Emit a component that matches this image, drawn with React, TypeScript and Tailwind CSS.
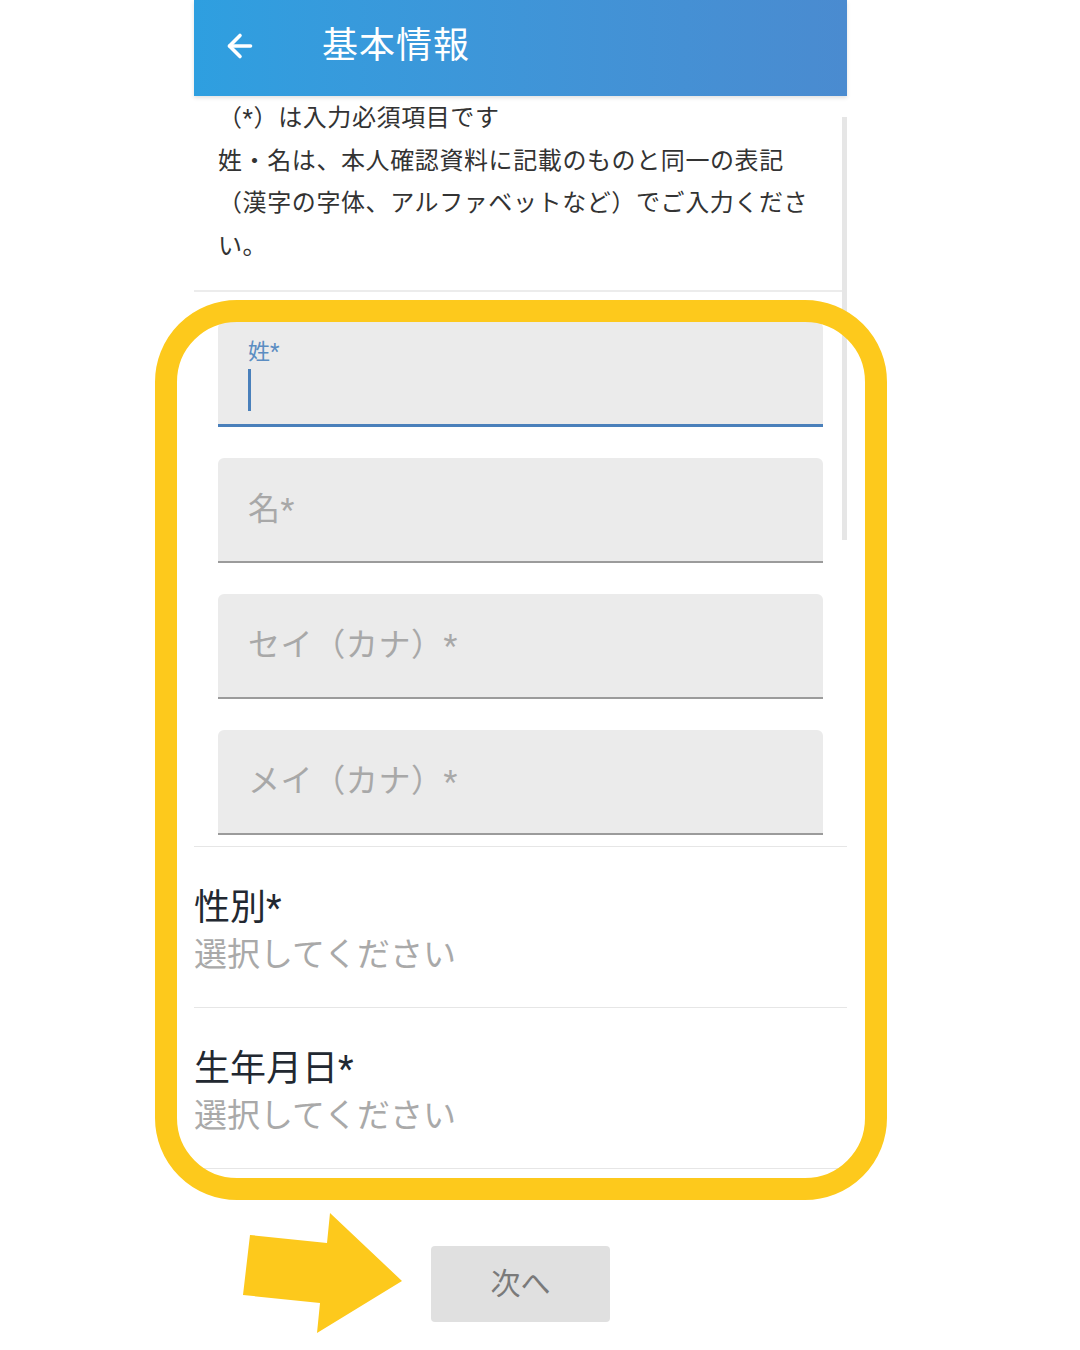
import { ArrowLeft } from "lucide-react";

const font = { fontFamily: 'Roboto, "Noto Sans CJK JP", "Noto Sans", sans-serif' };

function NameField({ label }: { label: string }) {
  return (
    <div className="flex h-[105px] items-center rounded-t-[6px] border-b-2 border-[#9b9b9b] bg-[#ebebeb] px-[30px]">
      <span className="text-[32px] leading-none tracking-[0.6px] text-[#a8a8a8]">{label}</span>
    </div>
  );
}

function SelectRow({ label }: { label: string }) {
  return (
    <div className="flex h-[161px] flex-col justify-center border-b border-[#e6e6e6] pt-[8px]">
      <span className="text-[36px] leading-[48px] text-[#222831]">{label}</span>
      <span className="text-[33px] leading-[46px] text-[#a9a9a9]">選択してください</span>
    </div>
  );
}

export default function App() {
  return (
    <div className="relative h-[1350px] w-[1080px] overflow-hidden bg-white" style={font}>
      <div className="ml-[194px] w-[653px]">
        <header className="relative z-10 flex h-[96px] items-center bg-gradient-to-r from-[#2e9fe0] to-[#4a8bd0] pb-[5px] shadow-[0_2px_4px_rgba(0,0,0,0.12)]">
          <ArrowLeft className="ml-[28px] h-[36px] w-[36px] text-white" strokeWidth={2.4} aria-hidden="true" />
          <h1 className="ml-[64px] text-[36px] font-normal tracking-[1px] text-white">基本情報</h1>
        </header>

        <section className="mt-[1px] border-b-2 border-[#ececec] pb-[22px] pl-[24px] pr-[30px] text-[24px] leading-[42.7px] tracking-[0.6px] text-[#333]">
          <p>（*）は入力必須項目です</p>
          <p>姓・名は、本人確認資料に記載のものと同一の表記（漢字の字体、アルファベットなど）でご入力ください。</p>
        </section>

        <div className="flex flex-col gap-[31px] px-[24px] pb-[11px] pt-[30px]">
          <div className="flex h-[105px] flex-col rounded-t-[6px] border-b-[3px] border-[#4a80bb] bg-[#ebebeb] px-[30px] pt-[15px]">
            <span className="text-[22px] leading-[30px] text-[#5b8dc2]">姓*</span>
            <span className="mt-[2px] h-[42px] w-[3px] bg-[#4a80bb]" />
          </div>
          <NameField label="名*" />
          <NameField label="セイ（カナ）*" />
          <NameField label="メイ（カナ）*" />
        </div>

        <div className="border-t border-[#e6e6e6]">
          <SelectRow label="性別*" />
          <SelectRow label="生年月日*" />
        </div>

        <div className="flex justify-center pt-[77px]">
          <button
            type="button"
            className="flex h-[76px] w-[179px] items-center justify-center rounded-[4px] bg-[#e0e0e0] text-[30px] text-[#7a7a7a]"
          >
            次へ
          </button>
        </div>
      </div>

      {/* scrollbar */}
      <div className="absolute left-[842px] top-[117px] h-[423px] w-[5px] bg-[#e6e6e6]" />

      {/* annotation */}
      <div className="absolute left-[155px] top-[300px] h-[900px] w-[732px] rounded-[82px] border-[22px] border-[#fdc91c]" />
      <svg className="absolute left-0 top-0" width="1080" height="1350" aria-hidden="true">
        <polygon
          points="250,1235 327,1243 330,1213 402,1281 317,1333 320,1303 243,1295"
          fill="#fdc91c"
        />
      </svg>
    </div>
  );
}
